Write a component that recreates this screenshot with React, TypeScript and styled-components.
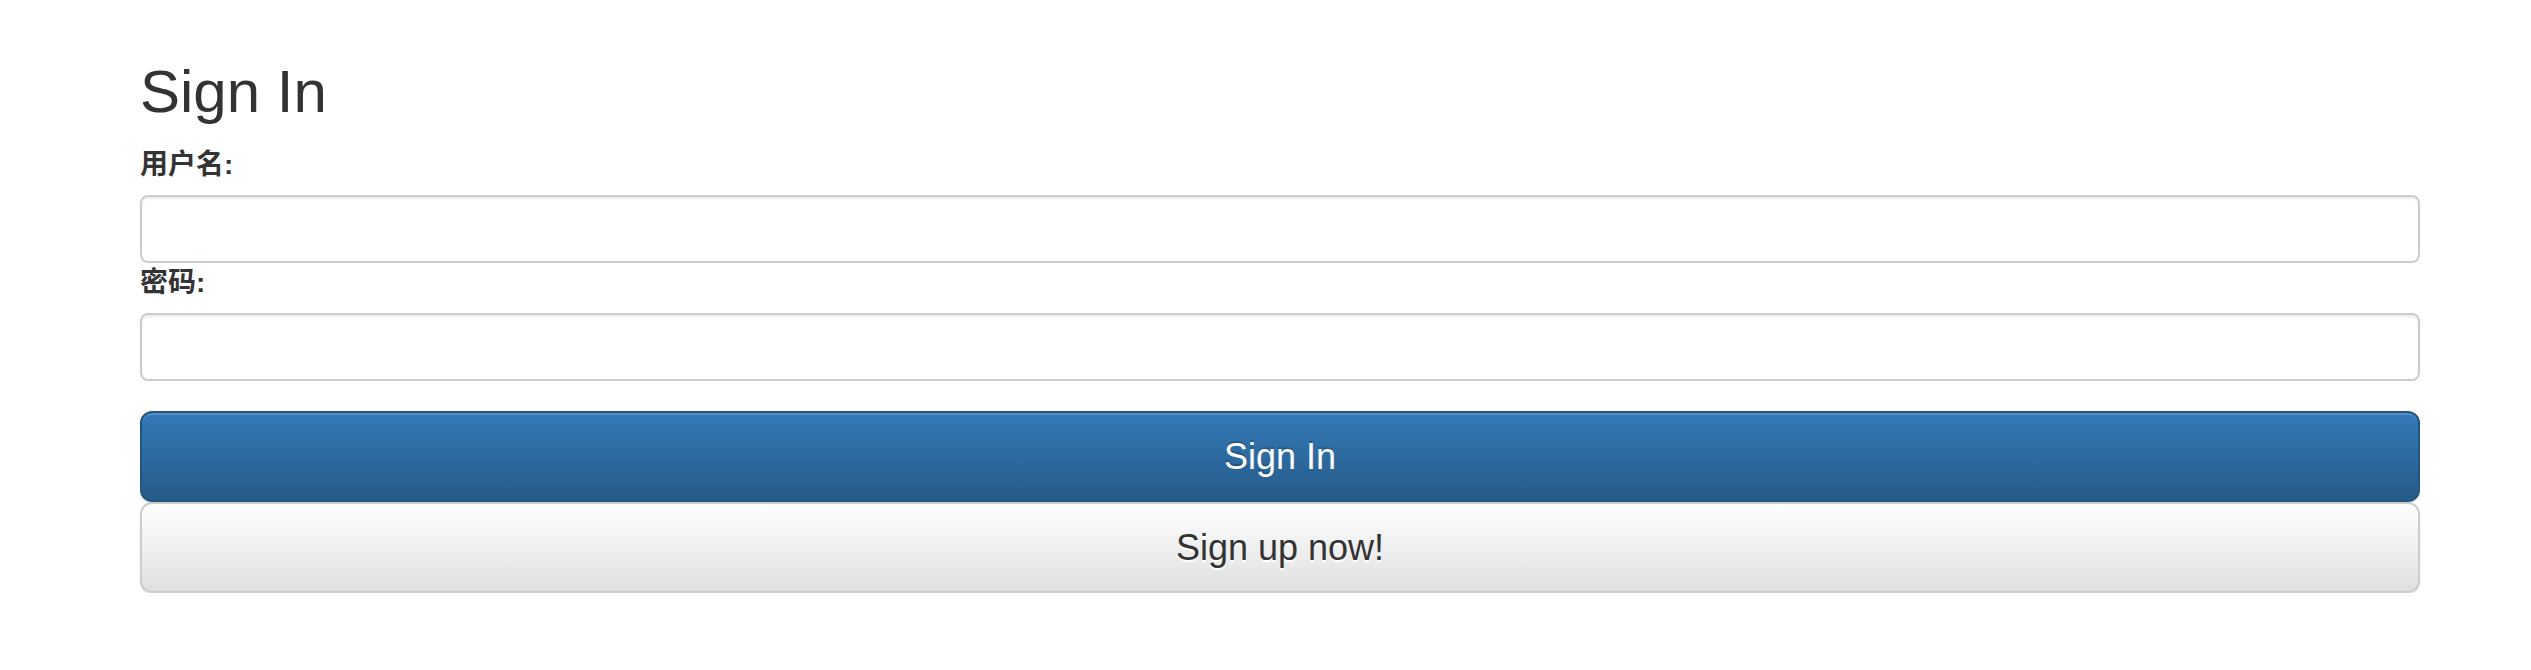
import React from 'react';
import styled, { createGlobalStyle } from 'styled-components';

const GlobalStyle = createGlobalStyle`
  html, body {
    margin: 0;
    padding: 0;
    background: #fff;
  }
  body {
    font-family: "Liberation Sans", Arial, "Noto Sans CJK SC", sans-serif;
    color: #333;
  }
  * {
    box-sizing: border-box;
  }
`;

const Page = styled.div`
  padding: 59px 0 0 140px;
`;

const Form = styled.form`
  width: 2280px;
  display: flex;
  flex-direction: column;
`;

const Title = styled.h2`
  margin: 0 0 20px;
  font-size: 60px;
  font-weight: 500;
  line-height: 66px;
  color: #333;
`;

const Label = styled.label`
  display: block;
  margin-bottom: 10px;
  font-family: "Liberation Sans", "Noto Sans CJK SC", sans-serif;
  font-size: 28px;
  font-weight: 700;
  line-height: 40px;
  color: #333;
`;

const Input = styled.input`
  display: block;
  width: 100%;
  height: 68px;
  padding: 12px 24px;
  font-size: 28px;
  font-family: inherit;
  color: #555;
  background: #fff;
  border: 2px solid #ccc;
  border-radius: 8px;
  box-shadow: inset 0 2px 2px rgba(0, 0, 0, 0.075);
  outline: none;
`;

const Actions = styled.div`
  margin-top: 30px;
  display: flex;
  flex-direction: column;
`;

const Button = styled.button<{ $primary?: boolean }>`
  display: block;
  width: 100%;
  height: 91px;
  font-family: "Liberation Sans", Arial, sans-serif;
  font-size: 36px;
  line-height: 48px;
  border-radius: 12px;
  border: 2px solid ${(p) => (p.$primary ? '#245580' : '#ccc')};
  color: ${(p) => (p.$primary ? '#fff' : '#333')};
  background-image: ${(p) =>
    p.$primary
      ? 'linear-gradient(to bottom, #337ab7 0, #265a88 100%)'
      : 'linear-gradient(to bottom, #fff 0, #e0e0e0 100%)'};
  text-shadow: ${(p) => (p.$primary ? '0 -2px 0 rgba(0,0,0,0.2)' : '0 2px 0 #fff')};
  box-shadow: inset 0 2px 0 rgba(255, 255, 255, 0.15), 0 2px 2px rgba(0, 0, 0, 0.075);
  cursor: pointer;
`;

export default function App() {
  return (
    <>
      <GlobalStyle />
      <Page>
        <Form onSubmit={(e) => e.preventDefault()}>
          <Title>Sign In</Title>
          <Label htmlFor="username">用户名:</Label>
          <Input id="username" type="text" />
          <Label htmlFor="password">密码:</Label>
          <Input id="password" type="password" />
          <Actions>
            <Button $primary type="submit">Sign In</Button>
            <Button type="button">Sign up now!</Button>
          </Actions>
        </Form>
      </Page>
    </>
  );
}
